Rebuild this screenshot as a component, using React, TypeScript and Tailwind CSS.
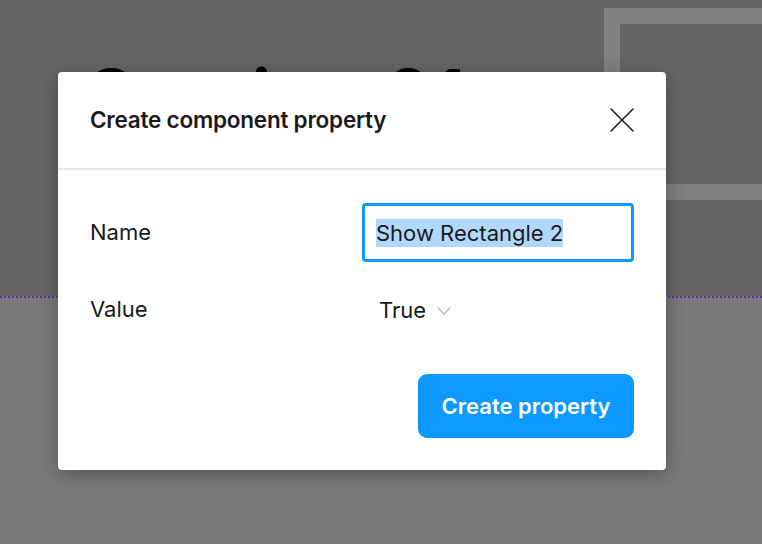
import { ChevronDown } from 'lucide-react';

export default function App() {
  return (
    <div
      className="relative w-[762px] h-[544px] overflow-hidden"
      style={{ fontFamily: 'Inter, "Noto Sans", sans-serif' }}
    >
      {/* Canvas behind the dialog */}
      <div className="flex flex-col h-full">
        <div className="h-[296px] bg-[#656565]" />
        <div className="flex-1 bg-[#7a7a7a] border-t-2 border-dotted border-[#5b2ea6]" />
      </div>

      {/* Frame title on canvas */}
      <div className="absolute left-[86px] top-[58px] text-[76px] font-semibold leading-none text-black">
        Section 01
      </div>

      {/* Frame outline on canvas */}
      <div className="absolute left-[604px] top-[8px] w-[200px] h-[192px] border-[16px] border-[#808080]" />

      {/* Dialog */}
      <div className="absolute left-[58px] top-[72px] w-[608px] h-[398px] bg-white rounded-[4px] shadow-[0_4px_20px_rgba(0,0,0,0.3)] flex flex-col">
        <div className="h-[98px] flex items-center justify-between pl-[32px] pr-[32px] border-b-2 border-[#e6e6e6]">
          <h2 className="text-[22.5px] font-semibold text-[#1a1a1a] tracking-[-0.01em]">
            Create component property
          </h2>
          <button className="text-[#1e1e1e]">
            <svg width="24" height="24" viewBox="0 0 24 24" fill="none" stroke="currentColor" strokeWidth={1.6} strokeLinecap="round">
              <line x1="1" y1="1" x2="23" y2="23" />
              <line x1="23" y1="1" x2="1" y2="23" />
            </svg>
          </button>
        </div>

        <div className="flex flex-col px-[32px] pt-[33px]">
          <div className="flex items-center">
            <span className="w-[272px] text-[22px] text-[#1a1a1a]">Name</span>
            <div className="w-[272px] h-[59px] border-[3px] border-[#0d99ff] rounded-[4px] flex items-center pl-[11px]">
              <span className="text-[22px] text-[#1a1a1a] bg-[#b2d7fd] leading-[28px]">
                Show Rectangle 2
              </span>
            </div>
          </div>

          <div className="flex items-center mt-[18px] h-[58px]">
            <span className="w-[272px] text-[22px] text-[#1a1a1a]">Value</span>
            <div className="flex items-center gap-[6px] pl-[17px] pt-[3px]">
              <span className="text-[22px] text-[#1a1a1a]">True</span>
              <ChevronDown className="w-[24px] h-[24px] text-[#b3b3b3]" strokeWidth={1.2} />
            </div>
          </div>

          <div className="flex justify-end mt-[36px]">
            <button className="w-[216px] h-[64px] rounded-[9px] bg-[#0d99ff] text-white text-[22px] font-semibold">
              Create property
            </button>
          </div>
        </div>
      </div>
    </div>
  );
}
